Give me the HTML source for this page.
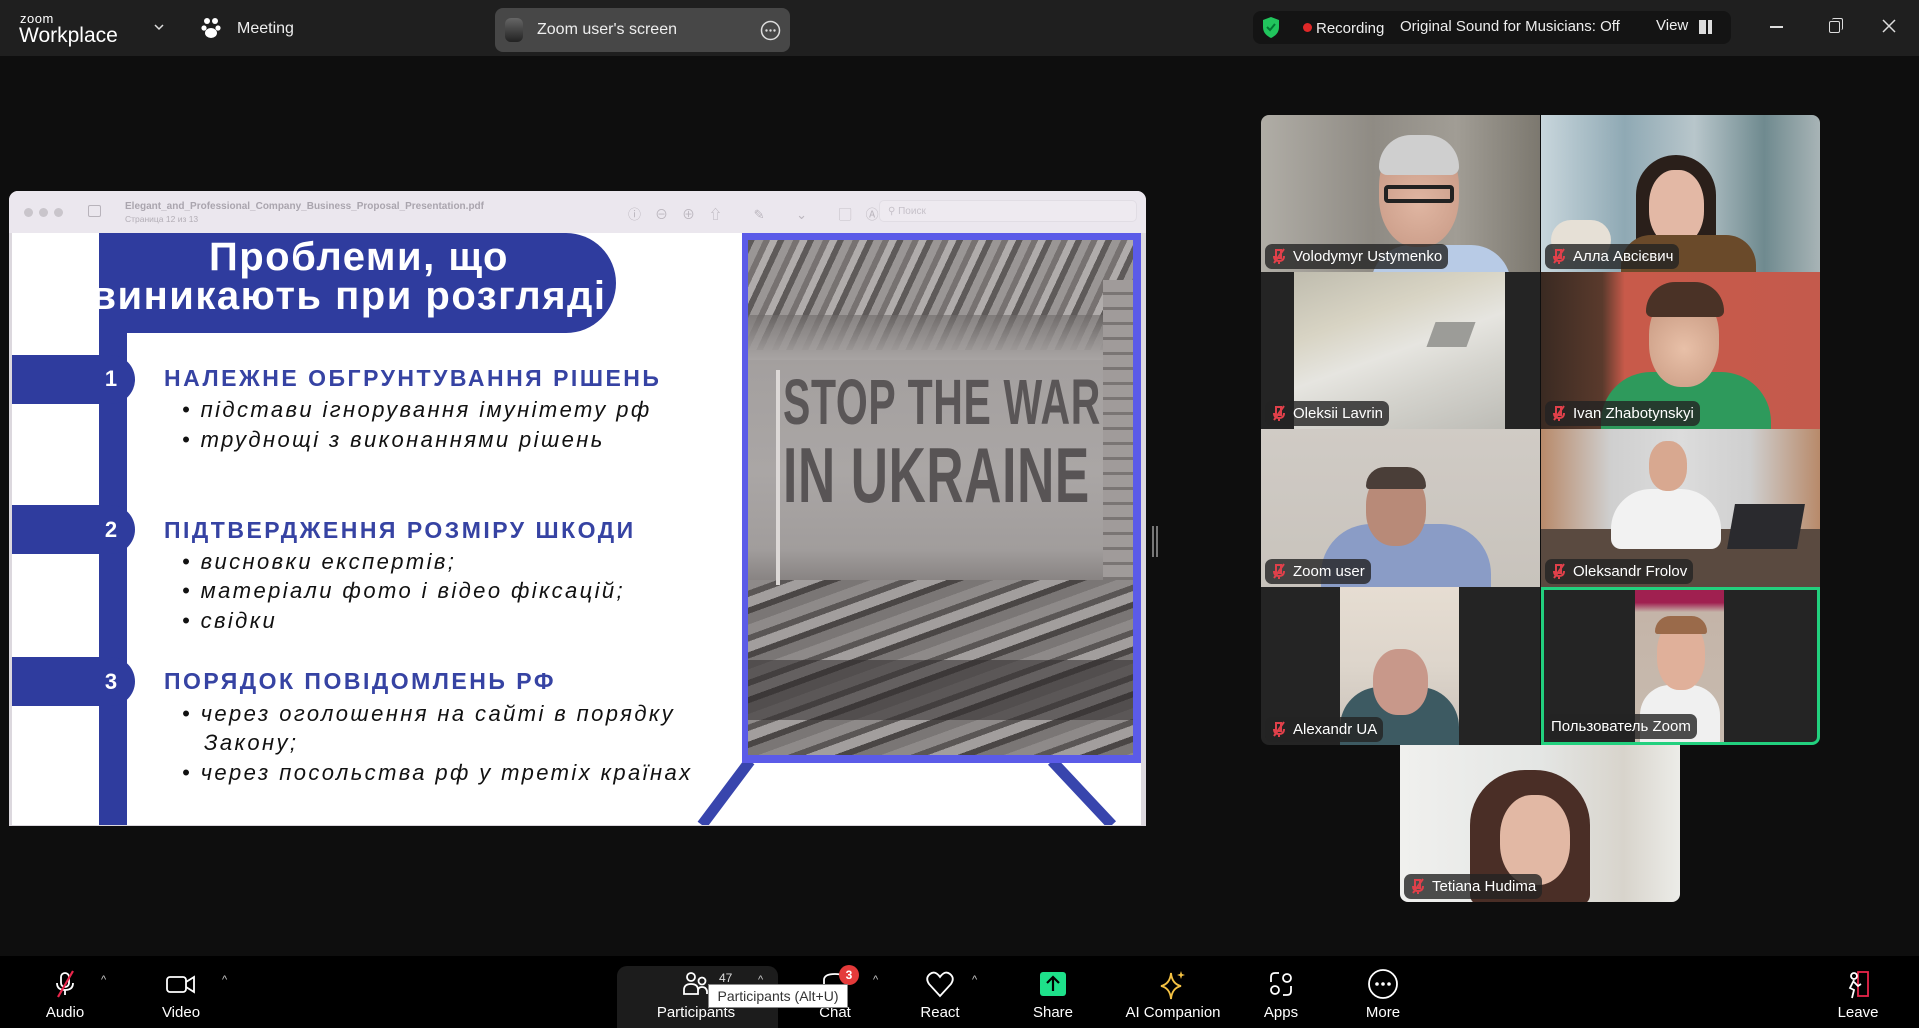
<!DOCTYPE html>
<html><head><meta charset="utf-8">
<style>
*{margin:0;padding:0;box-sizing:border-box}
body{width:1919px;height:1028px;overflow:hidden;background:#0e0e0e;font-family:"Liberation Sans","Noto Sans CJK SC",sans-serif;position:relative;color:#fff}
.abs{position:absolute}
#top{left:0;top:0;width:1919px;height:56px;background:#1f1f1f}
#bot{left:0;top:956px;width:1919px;height:72px;background:#000}
.bi{position:absolute;top:0;height:72px;text-align:center;transform:translateX(-50%)}
.bi .lb{position:absolute;top:48px;left:50%;transform:translateX(-50%);font-size:15px;color:#fff;white-space:nowrap}
.bi svg{position:absolute;top:14px;left:50%;transform:translateX(-50%)}
.car{position:absolute;top:18px;font-size:11px;color:#ccc}
.tile{position:absolute;overflow:hidden;background:#242424}
.lab{position:absolute;left:4px;bottom:3px;height:25px;border-radius:7px;background:rgba(35,35,35,.8);font-size:15px;line-height:25px;padding:0 6px 0 28px;white-space:nowrap;color:#fff}
.lab svg{position:absolute;left:7px;top:4px}
.slide{position:absolute;left:12px;top:233px;width:1129px;height:592px;background:#fff;overflow:hidden}
.hb{position:absolute;left:0;width:123px;height:49px;background:#2f3c9e;border-radius:0 25px 25px 0}
.num{position:absolute;left:91px;width:16px;text-align:center;color:#fff;font-weight:bold;font-size:22px}
.hd{position:absolute;left:152px;color:#3643a3;font-weight:bold;font-size:23px;letter-spacing:2.5px;white-space:nowrap}
.bl{position:absolute;left:170px;color:#111;font-style:italic;font-size:22px;letter-spacing:2.4px;white-space:nowrap}
.rb{position:absolute;background:#4a4645}
</style></head><body>

<div class="abs" id="top">
  <div class="abs" style="left:20px;top:11px;font-size:13px;letter-spacing:.5px">zoom</div>
  <div class="abs" style="left:19px;top:24px;font-size:21px">Workplace</div>
  <svg class="abs" style="left:153px;top:23px" width="12" height="10"><path d="M2 2l4 4 4-4" stroke="#ddd" stroke-width="1.5" fill="none"/></svg>
  <svg class="abs" style="left:201px;top:17px" width="20" height="22" fill="#fff"><circle cx="6" cy="4" r="3"/><circle cx="14" cy="4" r="3"/><circle cx="3" cy="11" r="2.6"/><circle cx="17" cy="11" r="2.6"/><ellipse cx="10" cy="16" rx="6" ry="5"/></svg>
  <div class="abs" style="left:237px;top:20px;font-size:16px;color:#eee">Meeting</div>
  <div class="abs" style="left:495px;top:8px;width:295px;height:44px;background:#474747;border-radius:8px">
    <div class="abs" style="left:10px;top:10px;width:18px;height:24px;border-radius:6px;background:linear-gradient(#666,#222)"></div>
    <div class="abs" style="left:42px;top:13px;font-size:16px;color:#eee">Zoom user's screen</div>
    <svg class="abs" style="left:265px;top:12px" width="21" height="21"><circle cx="10.5" cy="10.5" r="9" stroke="#ddd" stroke-width="1.5" fill="none"/><circle cx="6.5" cy="10.5" r="1.2" fill="#ddd"/><circle cx="10.5" cy="10.5" r="1.2" fill="#ddd"/><circle cx="14.5" cy="10.5" r="1.2" fill="#ddd"/></svg>
  </div>
  <div class="abs" style="left:1253px;top:11px;width:478px;height:33px;background:#141414;border-radius:8px">
    <svg class="abs" style="left:8px;top:5px" width="20" height="23"><path d="M10 1L2 4v7c0 6 4 9 8 11 4-2 8-5 8-11V4z" fill="#21c55d"/><path d="M6 11l3 3 5-6" stroke="#073" stroke-width="2" fill="none"/></svg>
    <div class="abs" style="left:50px;top:12px;width:9px;height:9px;border-radius:50%;background:#e02828"></div>
    <div class="abs" style="left:63px;top:9px;font-size:15px;color:#eee">Recording</div>
    <div class="abs" style="left:147px;top:7px;font-size:15px;color:#eee">Original Sound for Musicians: Off</div>
    <div class="abs" style="left:403px;top:6px;font-size:15px;color:#eee">View</div>
    <div class="abs" style="left:446px;top:9px;width:13px;height:14px;background:#ddd"></div>
    <div class="abs" style="left:453px;top:9px;width:1.5px;height:14px;background:#141414"></div>
  </div>
  <div class="abs" style="left:1770px;top:26px;width:13px;height:1.5px;background:#ddd"></div>
  <div class="abs" style="left:1829px;top:21px;width:11px;height:12px;border:1.5px solid #ddd;border-radius:2px"></div>
  <div class="abs" style="left:1832px;top:18px;width:11px;height:12px;border-top:1.5px solid #ddd;border-right:1.5px solid #ddd;border-radius:2px"></div>
  <svg class="abs" style="left:1882px;top:19px" width="14" height="14"><path d="M1 1l12 12M13 1L1 13" stroke="#ddd" stroke-width="1.5"/></svg>
</div>

<!-- PDF window -->
<div class="abs" style="left:9px;top:191px;width:1137px;height:635px;background:#dcd8de;border-radius:9px 9px 0 0;overflow:hidden">
  <div class="abs" style="left:0;top:0;width:1137px;height:42px;background:#ebe7ee"></div>
  <div class="abs" style="left:15px;top:17px;width:9px;height:9px;border-radius:50%;background:#c9c5cb"></div>
  <div class="abs" style="left:30px;top:17px;width:9px;height:9px;border-radius:50%;background:#c9c5cb"></div>
  <div class="abs" style="left:45px;top:17px;width:9px;height:9px;border-radius:50%;background:#c9c5cb"></div>
  <div class="abs" style="left:79px;top:14px;width:13px;height:12px;border:1.2px solid #b8b3bb;border-radius:2px"></div>
  <div class="abs" style="left:116px;top:10px;font-size:10px;color:#aaa5ae;font-weight:bold">Elegant_and_Professional_Company_Business_Proposal_Presentation.pdf</div>
  <div class="abs" style="left:116px;top:23px;font-size:8.5px;color:#b3aeb6">Страница 12 из 13</div>
  <div class="abs" style="left:619px;top:13px;font-size:13px;color:#bbb6be;letter-spacing:14px">ⓘ⊖⊕⇧ ✎ ⌄ ▢Ⓐ</div>
  <div class="abs" style="left:870px;top:9px;width:258px;height:22px;border:1px solid #e1dde4;border-radius:5px;background:#eeeaf0;font-size:10px;color:#c6c1c9;padding:5px 0 0 8px">⚲ Поиск</div>
</div>
<div class="slide">
  <div class="abs" style="left:87px;top:0;width:28px;height:592px;background:#2f3c9e"></div>
  <div class="abs" style="left:87px;top:0;width:517px;height:100px;background:#2f3c9e;border-radius:0 50px 50px 0;overflow:hidden">
    <div class="abs" style="left:-100px;width:720px;top:2px;text-align:center;font-weight:bold;font-size:40px;letter-spacing:1.5px;color:#fff;white-space:nowrap">Проблеми, що</div>
    <div class="abs" style="left:-110px;width:720px;top:41px;text-align:center;font-weight:bold;font-size:40px;letter-spacing:1.5px;color:#fff;white-space:nowrap">виникають при розгляді</div>
  </div>
  <div class="hb" style="top:122px"></div><div class="num" style="top:133px">1</div>
  <div class="hb" style="top:272px"></div><div class="num" style="top:284px">2</div>
  <div class="hb" style="top:424px"></div><div class="num" style="top:436px">3</div>
  <div class="hd" style="top:132px">НАЛЕЖНЕ ОБГРУНТУВАННЯ РІШЕНЬ</div>
  <div class="bl" style="top:164px">• підстави ігнорування імунітету рф</div>
  <div class="bl" style="top:194px">• труднощі з виконаннями рішень</div>
  <div class="hd" style="top:284px">ПІДТВЕРДЖЕННЯ РОЗМІРУ ШКОДИ</div>
  <div class="bl" style="top:316px">• висновки експертів;</div>
  <div class="bl" style="top:345px">• матеріали фото і відео фіксацій;</div>
  <div class="bl" style="top:375px">• свідки</div>
  <div class="hd" style="top:435px">ПОРЯДОК ПОВІДОМЛЕНЬ РФ</div>
  <div class="bl" style="top:468px">• через оголошення на сайті в порядку</div>
  <div class="bl" style="top:497px;left:192px">Закону;</div>
  <div class="bl" style="top:527px">• через посольства рф у третіх країнах</div>
  <svg class="abs" style="left:0;top:0" width="1129" height="592"><path d="M738 528L690 592M1040 528L1100 592" stroke="#3845ad" stroke-width="11"/></svg>
  <div class="abs" style="left:730px;top:0;width:399px;height:530px;background:#5b5be8;padding:7px 8px 8px 6px">
    <div style="position:relative;width:100%;height:100%;overflow:hidden;background:linear-gradient(180deg,#7a7675 0%,#9a9594 10%,#a4a09f 25%,#aaa6a5 45%,#a19d9c 60%,#787372 70%,#5d5958 80%,#8a8584 88%,#6b6766 100%)">
      <div class="abs" style="left:0;top:0;width:100%;height:110px;background:repeating-linear-gradient(115deg,#5e5a59 0 6px,#9a9695 6px 14px,#777271 14px 20px,#b0acab 20px 27px)"></div>
      <div class="abs" style="left:0;top:75px;width:100%;height:45px;background:linear-gradient(180deg,rgba(110,106,105,.6),rgba(168,164,163,1))"></div>
      <div class="abs" style="left:0;top:340px;width:100%;height:178px;background:repeating-linear-gradient(160deg,#8e8a89 0 10px,#5a5655 10px 16px,#a29e9d 16px 26px,#4a4645 26px 32px,#7a7675 32px 42px)"></div>
      <div class="abs" style="left:0;top:420px;width:100%;height:60px;background:rgba(50,46,45,.55)"></div>
      <div class="abs" style="right:0;top:40px;width:30px;height:300px;background:repeating-linear-gradient(180deg,#a09b9a 0 12px,#7a7574 12px 15px)"></div>
      <div class="abs" style="left:28px;top:130px;width:4px;height:215px;background:#dcd8d6"></div>
      <div class="abs" style="left:35px;top:130px;width:400px;transform:scaleX(.64);transform-origin:0 0;font-weight:bold;font-size:64px;line-height:64px;color:#5a5657;white-space:nowrap;letter-spacing:1px">STOP THE WAR</div>
      <div class="abs" style="left:35px;top:196px;width:400px;transform:scaleX(.66);transform-origin:0 0;font-weight:bold;font-size:78px;line-height:78px;color:#585455;white-space:nowrap;letter-spacing:1px">IN UKRAINE</div>
    </div>
  </div>
</div>
<div class="abs" style="left:1152px;top:526px;width:2px;height:31px;background:#777"></div>
<div class="abs" style="left:1156px;top:526px;width:2px;height:31px;background:#777"></div>

<!-- video tiles -->
<div class="tile" style="left:1261px;top:115px;width:279px;height:157px;border-radius:8px 0 0 0;background:linear-gradient(90deg,#b0ada6,#8f8b84 40%,#a19d95 70%,#7c786f)">
  <div class="abs" style="left:110px;top:130px;width:140px;height:60px;border-radius:40px 40px 0 0;background:#b8cbe6"></div>
  <div class="abs" style="left:118px;top:22px;width:80px;height:110px;border-radius:45%;background:radial-gradient(circle at 50% 60%,#e0b6a2,#c0907c)"></div>
  <div class="abs" style="left:118px;top:20px;width:80px;height:40px;border-radius:40px 40px 10px 10px;background:#cfcfcf"></div>
  <div class="abs" style="left:123px;top:70px;width:70px;height:18px;border:4px solid #222;border-radius:4px"></div>
  <div class="lab"><svg width="14" height="16"><path d="M4 2h5v8H4zM2 8q0 5 5 5t5-5M7 13v3M12 1L2 15" stroke="#e0404a" stroke-width="2" fill="none"/></svg>Volodymyr Ustymenko</div>
</div>
<div class="tile" style="left:1541px;top:115px;width:279px;height:157px;border-radius:0 8px 0 0;background:linear-gradient(90deg,#c8d6dc,#8fa9b4 30%,#b8c6cb 55%,#6f8a8f 80%,#a8b4b6)">
  <div class="abs" style="left:95px;top:40px;width:80px;height:117px;border-radius:40px 40px 0 0;background:#2a1f1a"></div>
  <div class="abs" style="left:108px;top:55px;width:55px;height:75px;border-radius:45%;background:#e3b8a5"></div>
  <div class="abs" style="left:80px;top:120px;width:135px;height:40px;border-radius:30px 30px 0 0;background:#6a4a2a"></div>
  <div class="abs" style="left:10px;top:105px;width:60px;height:40px;border-radius:20px;background:#e6e0d6"></div>
  <div class="lab"><svg width="14" height="16"><path d="M4 2h5v8H4zM2 8q0 5 5 5t5-5M7 13v3M12 1L2 15" stroke="#e0404a" stroke-width="2" fill="none"/></svg>Алла Авсієвич</div>
</div>
<div class="tile" style="left:1261px;top:272px;width:279px;height:157px">
  <div class="abs" style="left:33px;top:0;width:211px;height:157px;background:linear-gradient(160deg,#bfbcae 0%,#d8d4c4 30%,#e6e5e0 50%,#d4d3cd 70%,#bdbcb6 100%)"></div>
  <div class="abs" style="left:170px;top:50px;width:40px;height:25px;background:#9c9c98;transform:skewX(-20deg)"></div>
  <div class="lab"><svg width="14" height="16"><path d="M4 2h5v8H4zM2 8q0 5 5 5t5-5M7 13v3M12 1L2 15" stroke="#e0404a" stroke-width="2" fill="none"/></svg>Oleksii Lavrin</div>
</div>
<div class="tile" style="left:1541px;top:272px;width:279px;height:157px;background:linear-gradient(90deg,#3a2a22 0%,#5a3a2c 22%,#c85a4a 30%,#c45a4c 100%)">
  <div class="abs" style="left:60px;top:100px;width:170px;height:60px;border-radius:50px 50px 0 0;background:#2e9a5c"></div>
  <div class="abs" style="left:108px;top:20px;width:70px;height:95px;border-radius:45%;background:radial-gradient(circle at 50% 60%,#e8c0a8,#c09078)"></div>
  <div class="abs" style="left:105px;top:10px;width:78px;height:35px;border-radius:40px 40px 8px 8px;background:#4a3226"></div>
  <div class="lab"><svg width="14" height="16"><path d="M4 2h5v8H4zM2 8q0 5 5 5t5-5M7 13v3M12 1L2 15" stroke="#e0404a" stroke-width="2" fill="none"/></svg>Ivan Zhabotynskyi</div>
</div>
<div class="tile" style="left:1261px;top:429px;width:279px;height:158px;background:linear-gradient(180deg,#d0cbc5,#c8c3bc)">
  <div class="abs" style="left:60px;top:95px;width:170px;height:70px;border-radius:50px 50px 0 0;background:#8a9cc6"></div>
  <div class="abs" style="left:105px;top:42px;width:60px;height:75px;border-radius:45%;background:#b88a78"></div>
  <div class="abs" style="left:105px;top:38px;width:60px;height:22px;border-radius:30px 30px 5px 5px;background:#4a3e38"></div>
  <div class="lab"><svg width="14" height="16"><path d="M4 2h5v8H4zM2 8q0 5 5 5t5-5M7 13v3M12 1L2 15" stroke="#e0404a" stroke-width="2" fill="none"/></svg>Zoom user</div>
</div>
<div class="tile" style="left:1541px;top:429px;width:279px;height:158px;background:linear-gradient(90deg,#b88a6a,#cfcfcf 25%,#dcdcdc 50%,#cfcfcf 75%,#b88a6a)">
  <div class="abs" style="left:0;top:100px;width:279px;height:58px;background:#5a4a40"></div>
  <div class="abs" style="left:70px;top:60px;width:110px;height:60px;border-radius:40px 40px 10px 10px;background:#f2f2f2"></div>
  <div class="abs" style="left:108px;top:12px;width:38px;height:50px;border-radius:45%;background:#d8a890"></div>
  <div class="abs" style="left:190px;top:75px;width:70px;height:45px;background:#2a2a2e;transform:skewX(-10deg)"></div>
  <div class="lab"><svg width="14" height="16"><path d="M4 2h5v8H4zM2 8q0 5 5 5t5-5M7 13v3M12 1L2 15" stroke="#e0404a" stroke-width="2" fill="none"/></svg>Oleksandr Frolov</div>
</div>
<div class="tile" style="left:1261px;top:587px;width:279px;height:158px;border-radius:0 0 0 8px">
  <div class="abs" style="left:79px;top:0;width:119px;height:158px;background:linear-gradient(180deg,#e6ddd2,#ddd5cb 50%,#c8c0b8)">
    <div class="abs" style="left:0;top:100px;width:119px;height:58px;border-radius:40px 40px 0 0;background:#3d5a62"></div>
    <div class="abs" style="left:33px;top:62px;width:55px;height:66px;border-radius:45%;background:#c8988a"></div>
  </div>
  <div class="lab"><svg width="14" height="16"><path d="M4 2h5v8H4zM2 8q0 5 5 5t5-5M7 13v3M12 1L2 15" stroke="#e0404a" stroke-width="2" fill="none"/></svg>Alexandr UA</div>
</div>
<div class="tile" style="left:1541px;top:587px;width:279px;height:158px;border-radius:0 0 8px 0;border:3px solid #22d07e">
  <div class="abs" style="left:91px;top:0;width:89px;height:158px;background:linear-gradient(180deg,#a02050 0,#a02050 8%,#c4b4a8 14%,#c8bcb0 100%)">
    <div class="abs" style="left:5px;top:95px;width:80px;height:60px;border-radius:30px 30px 0 0;background:#f0f0f0"></div>
    <div class="abs" style="left:22px;top:30px;width:48px;height:70px;border-radius:45%;background:#e0b09a"></div>
    <div class="abs" style="left:20px;top:26px;width:52px;height:18px;border-radius:30px 30px 5px 5px;background:#9a6a4a"></div>
  </div>
  <div class="lab" style="padding-left:5px;left:2px">Пользователь Zoom</div>
</div>
<div class="tile" style="left:1400px;top:745px;width:280px;height:157px;border-radius:0 0 8px 8px;background:linear-gradient(90deg,#f0f0ee,#e4e6e4 50%,#d8d4cc 80%,#ecece8)">
  <div class="abs" style="left:70px;top:25px;width:120px;height:135px;border-radius:55px 55px 10px 10px;background:#4a2e26"></div>
  <div class="abs" style="left:100px;top:50px;width:70px;height:90px;border-radius:45%;background:#e2b8a4"></div>
  <div class="lab"><svg width="14" height="16"><path d="M4 2h5v8H4zM2 8q0 5 5 5t5-5M7 13v3M12 1L2 15" stroke="#e0404a" stroke-width="2" fill="none"/></svg>Tetiana Hudima</div>
</div>

<!-- bottom bar -->
<div class="abs" id="bot">
  <div class="bi" style="left:65px;width:60px"><svg width="26" height="28"><rect x="9" y="3" width="8" height="14" rx="4" stroke="#fff" stroke-width="1.8" fill="none"/><path d="M5 13q0 7 8 7t8-7M13 20v5" stroke="#fff" stroke-width="1.8" fill="none"/><path d="M21 1L6 27" stroke="#e8254a" stroke-width="2.2"/></svg><div class="lb">Audio</div></div>
  <div class="car" style="left:101px">^</div>
  <div class="bi" style="left:181px;width:60px"><svg width="32" height="28"><rect x="2" y="7" width="19" height="15" rx="3" stroke="#fff" stroke-width="1.8" fill="none"/><path d="M21 12l8-5v15l-8-5" stroke="#fff" stroke-width="1.8" fill="none"/></svg><div class="lb">Video</div></div>
  <div class="car" style="left:222px">^</div>
  <div class="abs" style="left:617px;top:10px;width:161px;height:62px;background:#1c1c1c;border-radius:10px 10px 0 0"></div>
  <div class="bi" style="left:696px;width:100px"><svg width="28" height="28"><circle cx="9" cy="7" r="4" stroke="#fff" stroke-width="1.8" fill="none"/><circle cx="20" cy="11" r="3.5" stroke="#fff" stroke-width="1.8" fill="none"/><path d="M2 24v-4q0-6 7-6t7 6v4zM16 24v-3q0-4 4-4t5 4v3" stroke="#fff" stroke-width="1.8" fill="none"/></svg><div class="lb">Participants</div></div>
  <div class="abs" style="left:719px;top:15px;font-size:12px;color:#ddd">47</div>
  <div class="car" style="left:758px">^</div>
  <div class="bi" style="left:835px;width:60px"><svg width="30" height="28"><path d="M4 10q0-6 11-6t11 6v6q0 6-11 6l-8 4v-5q-3-2-3-5z" stroke="#fff" stroke-width="1.8" fill="none"/></svg><div class="lb">Chat</div></div>
  <div class="abs" style="left:839px;top:9px;width:20px;height:20px;border-radius:50%;background:#e43a3a;font-size:12px;font-weight:bold;text-align:center;line-height:20px">3</div>
  <div class="car" style="left:873px">^</div>
  <div class="bi" style="left:940px;width:60px"><svg width="30" height="28"><path d="M15 26L4 14Q0 8 5 4t10 3q5-7 10-3t1 10z" stroke="#fff" stroke-width="1.8" fill="none"/></svg><div class="lb">React</div></div>
  <div class="car" style="left:972px">^</div>
  <div class="bi" style="left:1053px;width:60px"><svg width="30" height="28"><rect x="2" y="2" width="26" height="24" rx="3" fill="#1ee08a"/><path d="M15 21V8M9 13l6-6 6 6" stroke="#000" stroke-width="2.2" fill="none"/></svg><div class="lb">Share</div></div>
  <div class="bi" style="left:1173px;width:110px"><svg width="30" height="30"><path d="M13 3q1 11 10 13q-9 2-10 13q-1-11-10-13q9-2 10-13z" stroke="#f5c243" stroke-width="1.8" fill="none"/><path d="M23 1l1 3 3 1-3 1-1 3-1-3-3-1 3-1z" fill="#f5c243"/></svg><div class="lb">AI Companion</div></div>
  <div class="bi" style="left:1281px;width:60px"><svg width="28" height="28"><path d="M4 12V7q0-4 4-4h4M24 16v5q0 4-4 4h-4" stroke="#fff" stroke-width="1.8" fill="none"/><circle cx="20" cy="8" r="4" stroke="#fff" stroke-width="1.8" fill="none"/><circle cx="8" cy="20" r="4" stroke="#fff" stroke-width="1.8" fill="none"/></svg><div class="lb">Apps</div></div>
  <div class="bi" style="left:1383px;width:60px"><svg width="32" height="32" style="top:12px"><circle cx="16" cy="16" r="14" stroke="#fff" stroke-width="1.8" fill="none"/><circle cx="10" cy="16" r="1.8" fill="#fff"/><circle cx="16" cy="16" r="1.8" fill="#fff"/><circle cx="22" cy="16" r="1.8" fill="#fff"/></svg><div class="lb">More</div></div>
  <div class="bi" style="left:1858px;width:60px"><svg width="30" height="30"><rect x="15" y="2" width="10" height="24" stroke="#e8254a" stroke-width="1.8" fill="none"/><circle cx="11" cy="6" r="3" stroke="#fff" stroke-width="1.8" fill="none"/><path d="M11 10l-4 8 4 2-2 8M11 12l4 4 3-2" stroke="#fff" stroke-width="1.8" fill="none"/></svg><div class="lb">Leave</div></div>
  <div class="abs" style="left:708px;top:28px;width:140px;height:24px;background:#fff;border:1px solid #888;color:#333;font-size:14px;line-height:22px;text-align:center">Participants (Alt+U)</div>
</div>
</body></html>
